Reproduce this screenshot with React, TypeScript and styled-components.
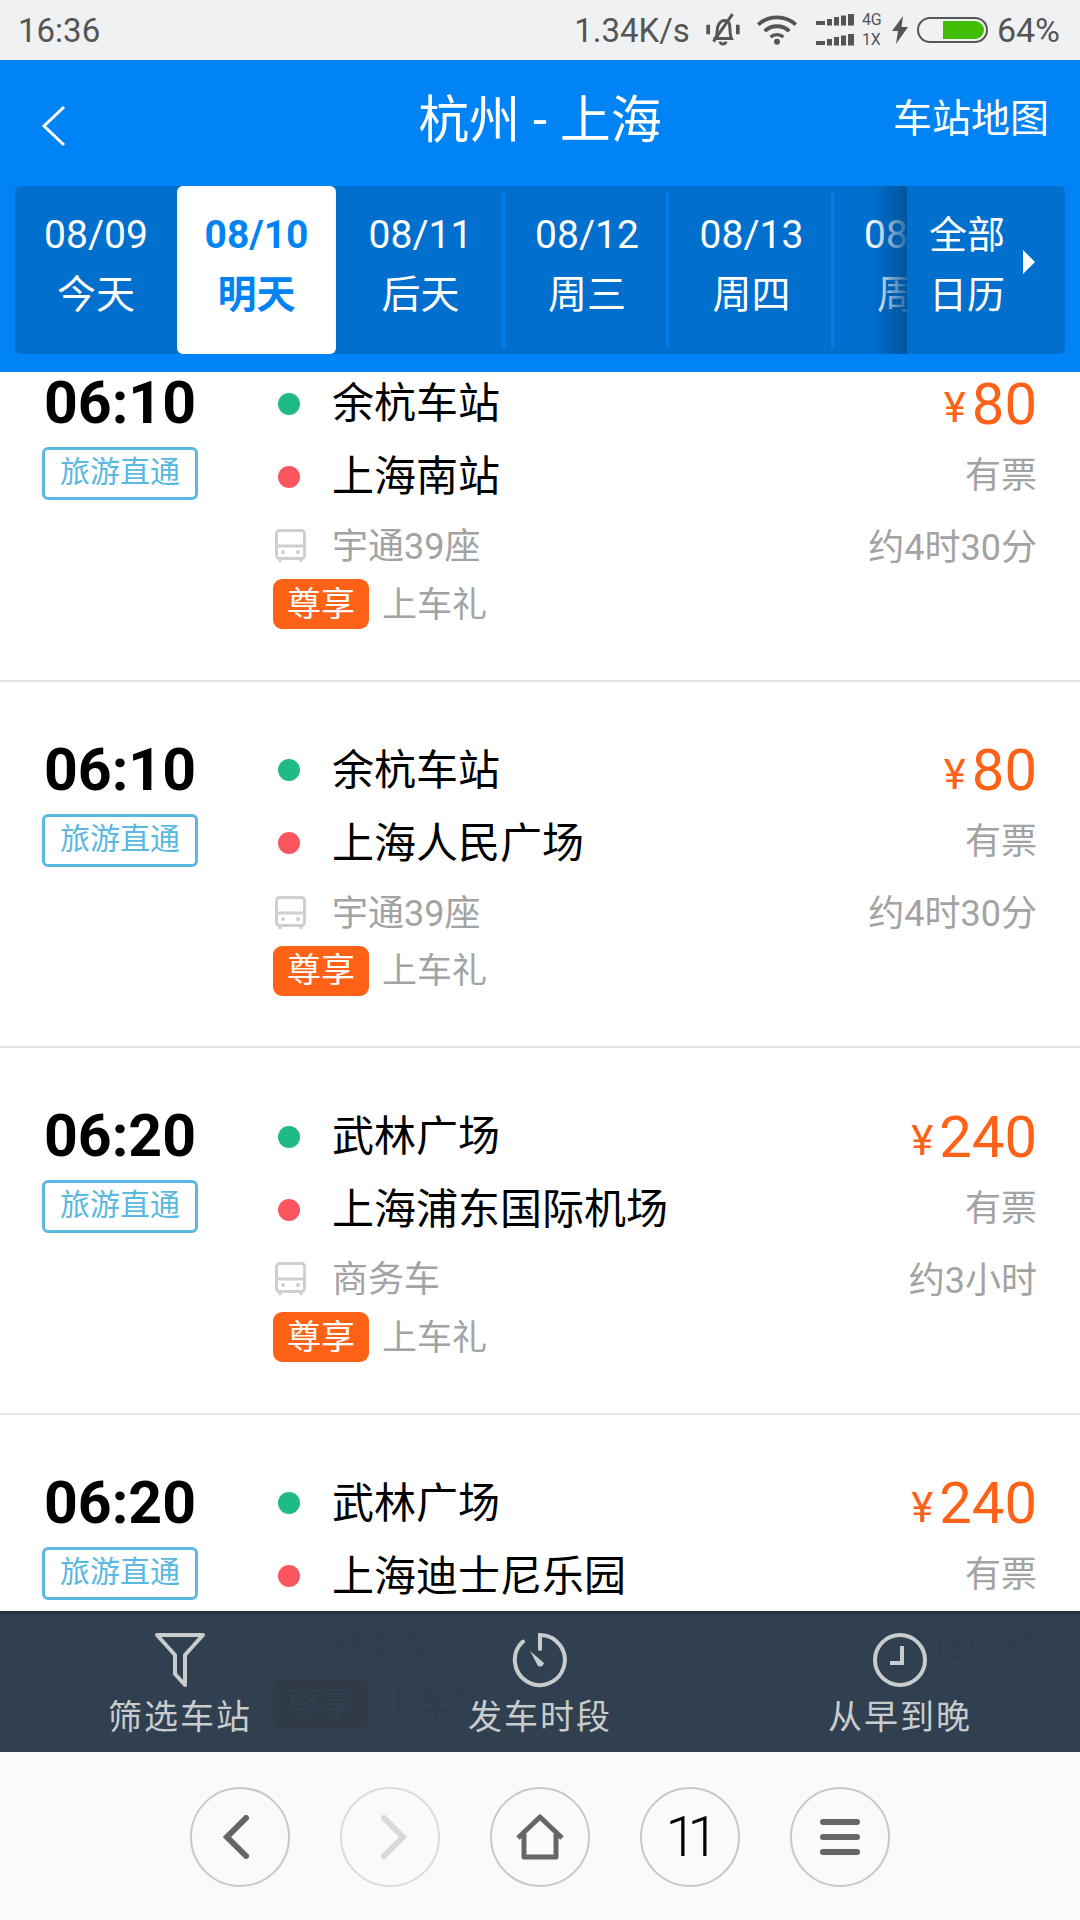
import React from 'react';
import styled, { createGlobalStyle } from 'styled-components';

type Trip = {
  time: string;
  from: string;
  to: string;
  price: string;
  bus: string;
  duration: string;
};

const trips: Trip[] = [
  { time: '06:10', from: '余杭车站', to: '上海南站', price: '80', bus: '宇通39座', duration: '约4时30分' },
  { time: '06:10', from: '余杭车站', to: '上海人民广场', price: '80', bus: '宇通39座', duration: '约4时30分' },
  { time: '06:20', from: '武林广场', to: '上海浦东国际机场', price: '240', bus: '商务车', duration: '约3小时' },
  { time: '06:20', from: '武林广场', to: '上海迪士尼乐园', price: '240', bus: '商务车', duration: '约3小时' },
];

const dates = [
  { date: '08/09', label: '今天', width: 162 },
  { date: '08/10', label: '明天', width: 159, active: true },
  { date: '08/11', label: '后天', width: 169 },
  { date: '08/12', label: '周三', width: 164 },
  { date: '08/13', label: '周四', width: 165 },
  { date: '08/14', label: '周五', width: 164 },
];

const SignalBars = () => (
  <svg width="38" height="12" viewBox="0 0 38 12">
    <rect x="0" y="7" width="9" height="4" fill="#555" />
    <rect x="11" y="5" width="5" height="6.500" fill="#555" />
    <rect x="18" y="3" width="5" height="8.500" fill="#555" />
    <rect x="25" y="1.500" width="5" height="10" fill="#555" />
    <rect x="32" y="0" width="6" height="11.500" fill="#555" />
  </svg>
);

const App = () => (
  <Screen>
    <GlobalStyle />
    <StatusBar>
      <Clock>16:36</Clock>
      <StatusRight>
        <Speed>1.34K/s</Speed>
        <svg width="36" height="34" viewBox="0 0 34 32" fill="none" stroke="#555">
          <path d="M10 24c2-3 1-7 2-11 1-4 4-6 6-6s4 1 5 3c1 4 0 10 2 14H8z" strokeWidth="2.800" />
          <path d="M14 27c1 3 5 3 6 0" strokeWidth="2.800" />
          <path d="M26 1L8 27" strokeWidth="2.800" />
          <path d="M3 11v9M31 11v9" strokeWidth="3.500" />
        </svg>
        <svg width="42" height="30" viewBox="0 0 38 28" fill="none" stroke="#555" strokeWidth="3.600">
          <path d="M1.500 9C11 0 27 0 36.500 9" />
          <path d="M7.500 15C14 9 24 9 30.500 15" />
          <path d="M13 20.500c3.500-3 8.500-3 12 0" strokeWidth="3" />
          <circle cx="19" cy="25" r="2.800" fill="#555" stroke="none" />
        </svg>
        <SignalStack>
          <SignalRow>
            <SignalBars />
            <NetLabel>4G</NetLabel>
          </SignalRow>
          <SignalRow>
            <SignalBars />
            <NetLabel>1X</NetLabel>
          </SignalRow>
        </SignalStack>
        <svg width="16" height="28" viewBox="0 0 16 28" fill="#555">
          <path d="M11 0L0 15h6L4 28l12-17H9.500z" />
        </svg>
        <svg width="71" height="26" viewBox="0 0 71 26" fill="none">
          <rect x="1" y="1" width="69" height="24" rx="12" stroke="#555" strokeWidth="2" />
          <path d="M26 4h32a9 9 0 0 1 0 18H26z" fill="#41bd06" />
        </svg>
        <Percent>64%</Percent>
      </StatusRight>
    </StatusBar>

    <Header>
      <TitleBar>
        <BackIcon width="25" height="42" viewBox="0 0 25 42" fill="none" stroke="#fff" strokeWidth="3">
          <path d="M23 2L3 21l20 19" />
        </BackIcon>
        <Title>杭州 - 上海</Title>
        <MapLink>车站地图</MapLink>
      </TitleBar>
      <DateStrip>
        {dates.map((d) => (
          <DateCell key={d.date} $active={d.active} style={{ flexBasis: d.width }}>
            <span>{d.date}</span>
            <span>{d.label}</span>
          </DateCell>
        ))}
        <AllDates>
          <AllLabel>
            <span>全部</span>
            <span>日历</span>
          </AllLabel>
          <svg width="12" height="24" viewBox="0 0 12 24" fill="#fff">
            <path d="M0 0l12 12L0 24z" />
          </svg>
        </AllDates>
      </DateStrip>
    </Header>

    <Main>
      <TripList>
        {trips.map((t) => (
          <Card key={t.to}>
            <TimeColumn>
              <Time>{t.time}</Time>
              <RouteTag>旅游直通</RouteTag>
            </TimeColumn>
            <RouteColumn>
              <Station>
                <Dot $color="#1fba85" />
                <StationName>{t.from}</StationName>
              </Station>
              <Station>
                <Dot $color="#fb5560" />
                <StationName>{t.to}</StationName>
              </Station>
              <BusRow>
                <BusIcon width="31" height="34" viewBox="0 0 31 34" fill="none" stroke="#cfcfcf">
                  <rect x="1.500" y="1.500" width="28" height="28" rx="3" strokeWidth="3" />
                  <path d="M2 17h27" strokeWidth="3" />
                  <circle cx="8" cy="23" r="2" fill="#cfcfcf" stroke="none" />
                  <circle cx="23" cy="23" r="2" fill="#cfcfcf" stroke="none" />
                  <path d="M5 31v2M26 31v2" strokeWidth="3" />
                </BusIcon>
                <MutedText>{t.bus}</MutedText>
              </BusRow>
              <PerkRow>
                <PerkBadge>尊享</PerkBadge>
                <PerkText>上车礼</PerkText>
              </PerkRow>
            </RouteColumn>
            <PriceColumn>
              <Price>
                <small>¥</small>
                {t.price}
              </Price>
              <Note>有票</Note>
              <Note>{t.duration}</Note>
            </PriceColumn>
          </Card>
        ))}
      </TripList>

      <FilterBar>
        <FilterItem>
          <svg width="52" height="56" viewBox="0 0 52 56" fill="none" stroke="#c9cbcc" strokeWidth="4" strokeLinejoin="round">
            <path d="M3 3h46L31 23v30L21 42V23z" />
          </svg>
          筛选车站
        </FilterItem>
        <FilterItem>
          <svg width="56" height="56" viewBox="0 0 56 56" fill="none" stroke="#c9cbcc" strokeWidth="4" strokeLinecap="round">
            <path d="M28 17V3a25 25 0 1 1-17 6.500" />
            <path d="M18 19l14 12a4 4 0 0 1-6 3z" fill="#c9cbcc" stroke="none" />
          </svg>
          发车时段
        </FilterItem>
        <FilterItem>
          <svg width="56" height="56" viewBox="0 0 56 56" fill="none" stroke="#c9cbcc" strokeWidth="4">
            <circle cx="28" cy="28" r="25" />
            <path d="M30 14v17H18" />
          </svg>
          从早到晚
        </FilterItem>
      </FilterBar>
    </Main>

    <BrowserNav>
      <NavButton>
        <NavChevron width="26" height="44" viewBox="0 0 26 44" fill="none" stroke="#666" strokeWidth="6" strokeLinecap="round" $shift={-4}>
          <path d="M23 3L4 22l19 19" />
        </NavChevron>
      </NavButton>
      <NavButton $disabled>
        <NavChevron width="26" height="44" viewBox="0 0 26 44" fill="none" stroke="#d9d9d9" strokeWidth="6" strokeLinecap="round" $shift={4}>
          <path d="M3 3l19 19L3 41" />
        </NavChevron>
      </NavButton>
      <NavButton>
        <svg width="48" height="46" viewBox="0 0 48 46" fill="none" stroke="#666" strokeWidth="5" strokeLinejoin="round">
          <path d="M2 24L24 3l22 21" />
          <path d="M8 20v23h32V20" />
        </svg>
      </NavButton>
      <NavButton>
        <TabCount>11</TabCount>
      </NavButton>
      <NavButton>
        <svg width="40" height="36" viewBox="0 0 40 36" fill="#666">
          <rect y="0" width="40" height="6" rx="3" />
          <rect y="15" width="40" height="6" rx="3" />
          <rect y="30" width="40" height="6" rx="3" />
        </svg>
      </NavButton>
    </BrowserNav>
  </Screen>
);

export default App;

const GlobalStyle = createGlobalStyle`
  html, body {
    margin: 0;
    padding: 0;
    background: #fff;
  }
  * {
    box-sizing: border-box;
  }
`;

const Screen = styled.div`
  width: 1080px;
  height: 1920px;
  display: flex;
  flex-direction: column;
  overflow: hidden;
  font-family: Roboto, 'Noto Sans CJK SC', sans-serif;
`;

const StatusBar = styled.div`
  flex: 0 0 60px;
  display: flex;
  align-items: center;
  justify-content: space-between;
  padding: 0 20px 0 18px;
  background: #eff1f3;
  color: #555;
  font-size: 33px;
`;

const Clock = styled.span``;

const StatusRight = styled.div`
  display: flex;
  align-items: center;
  gap: 9px;
  svg:nth-of-type(1) {
    margin: 0 6px;
  }
  svg:nth-of-type(2) {
    margin-right: 3px;
  }
`;

const Speed = styled.span``;

const SignalStack = styled.div`
  display: flex;
  flex-direction: column;
`;

const SignalRow = styled.div`
  display: flex;
  align-items: center;
  gap: 2px;
  height: 20px;
`;

const NetLabel = styled.span`
  width: 21px;
  font-size: 16px;
  line-height: 20px;
`;

const Percent = styled.span`
  font-size: 34px;
`;

const Header = styled.div`
  flex: 0 0 312px;
  z-index: 2;
  padding: 0 15px;
  background: #0084f5;
  color: #fff;
`;

const TitleBar = styled.div`
  height: 126px;
  display: grid;
  grid-template-columns: 1fr auto 1fr;
  align-items: center;
  padding: 0 16px 6px 16px;
`;

const BackIcon = styled.svg`
  margin: 12px 0 0 10px;
`;

const Title = styled.div`
  font-size: 51px;
  margin-bottom: 8px;
`;

const MapLink = styled.div`
  justify-self: end;
  font-size: 39px;
  margin-bottom: 10px;
`;

const DateStrip = styled.div`
  position: relative;
  height: 168px;
  display: flex;
  overflow: hidden;
  border-radius: 6px;
  background: #006fce;
`;

const DateCell = styled.div<{ $active?: boolean }>`
  position: relative;
  flex: 0 0 auto;
  display: flex;
  flex-direction: column;
  align-items: center;
  padding-top: 19px;
  font-size: 39px;
  line-height: 60px;
  background: ${(p) => (p.$active ? '#fff' : 'transparent')};
  color: ${(p) => (p.$active ? '#0084f5' : '#fff')};
  font-weight: ${(p) => (p.$active ? 700 : 400)};
  border-radius: ${(p) => (p.$active ? '6px' : '0')};
  &:nth-child(n + 3)::after {
    content: '';
    position: absolute;
    top: 6px;
    bottom: 6px;
    right: 0;
    width: 3px;
    background: #007fea;
  }
`;

const AllDates = styled.div`
  position: absolute;
  top: 0;
  right: 0;
  bottom: 0;
  width: 158px;
  display: flex;
  align-items: center;
  gap: 18px;
  padding-left: 22px;
  background: #006fce;
  &::before {
    content: '';
    position: absolute;
    top: 0;
    bottom: 0;
    left: -36px;
    width: 36px;
    background: linear-gradient(to right, rgba(0, 80, 150, 0), rgba(0, 80, 150, 0.85));
  }
  svg {
    margin-bottom: 16px;
  }
`;

const AllLabel = styled.div`
  display: flex;
  flex-direction: column;
  margin-bottom: 10px;
  font-size: 38px;
  line-height: 60px;
`;

const Main = styled.div`
  position: relative;
  flex: 1;
  min-height: 0;
  overflow: hidden;
`;

const TripList = styled.div`
  margin-top: -57px;
`;

const Card = styled.div`
  height: 366.5px;
  display: flex;
  padding: 52px 43px 0 44px;
  background: #fff;
  border-bottom: 2px solid #e4e4e4;
`;

const TimeColumn = styled.div`
  flex: 0 0 229px;
  display: flex;
  flex-direction: column;
  align-items: flex-start;
`;

const Time = styled.div`
  font-size: 59px;
  line-height: 72px;
  font-weight: 700;
  color: #000;
`;

const RouteTag = styled.div`
  margin: 8px 0 0 -2px;
  width: 156px;
  height: 53px;
  display: flex;
  align-items: center;
  justify-content: center;
  padding-bottom: 9px;
  border: 3px solid #5bb8e0;
  border-radius: 6px;
  font-size: 30px;
  color: #5bb8e0;
`;

const RouteColumn = styled.div`
  flex: 1;
  min-width: 0;
`;

const Station = styled.div`
  height: 73px;
  display: flex;
  align-items: center;
  font-size: 42px;
  color: #000;
`;

const StationName = styled.span`
  margin-bottom: 8px;
`;

const Dot = styled.i<{ $color: string }>`
  flex: 0 0 22px;
  height: 22px;
  margin: 0 32px 0 5px;
  border-radius: 50%;
  background: ${(p) => p.$color};
`;

const BusRow = styled.div`
  height: 66px;
  display: flex;
  align-items: center;
`;

const BusIcon = styled.svg`
  margin: 0 26px 0 2px;
`;

const MutedText = styled.span`
  margin-bottom: 6px;
  font-size: 36px;
  color: #a3a3a3;
`;

const PerkRow = styled.div`
  height: 50px;
  display: flex;
  align-items: center;
  gap: 13px;
`;

const PerkText = styled(MutedText)`
  font-size: 35px;
`;

const PerkBadge = styled.span`
  width: 96px;
  height: 50px;
  display: flex;
  align-items: center;
  justify-content: center;
  padding-bottom: 6px;
  border-radius: 9px;
  background: #ff6116;
  font-size: 34px;
  color: #fff;
`;

const PriceColumn = styled.div`
  display: flex;
  flex-direction: column;
  align-items: flex-end;
`;

const Price = styled.div`
  height: 73px;
  display: flex;
  align-items: center;
  gap: 6px;
  font-size: 58px;
  color: #ff6116;
  small {
    font-size: 42px;
    margin-top: 8px;
  }
`;

const Note = styled.div`
  height: 72px;
  display: flex;
  align-items: center;
  padding-bottom: 9px;
  font-size: 36px;
  color: #a3a3a3;
`;

const FilterBar = styled.div`
  position: absolute;
  left: 0;
  right: 0;
  bottom: 0;
  height: 141px;
  display: grid;
  grid-template-columns: repeat(3, 360px);
  border-top: 3px solid #25333f;
  background: rgba(40, 56, 73, 0.96);
`;

const FilterItem = styled.div`
  display: flex;
  flex-direction: column;
  align-items: center;
  padding-top: 18px;
  font-size: 34px;
  letter-spacing: 2px;
  line-height: 48px;
  color: #c9cbcc;
  svg {
    margin-bottom: 5px;
  }
`;

const BrowserNav = styled.div`
  flex: 0 0 168px;
  display: flex;
  align-items: center;
  justify-content: center;
  gap: 50px;
  padding-top: 2px;
  background: #fafafa;
`;

const NavButton = styled.div<{ $disabled?: boolean }>`
  width: 100px;
  height: 100px;
  display: flex;
  align-items: center;
  justify-content: center;
  border-radius: 50%;
  border: 2px solid ${(p) => (p.$disabled ? '#dcdcdc' : '#c8c8c8')};
`;

const NavChevron = styled.svg<{ $shift: number }>`
  margin-left: ${(p) => p.$shift * 2}px;
`;

const TabCount = styled.span`
  margin-right: 5px;
  font-size: 56px;
  font-weight: 300;
  letter-spacing: -9px;
  color: #000;
`;
